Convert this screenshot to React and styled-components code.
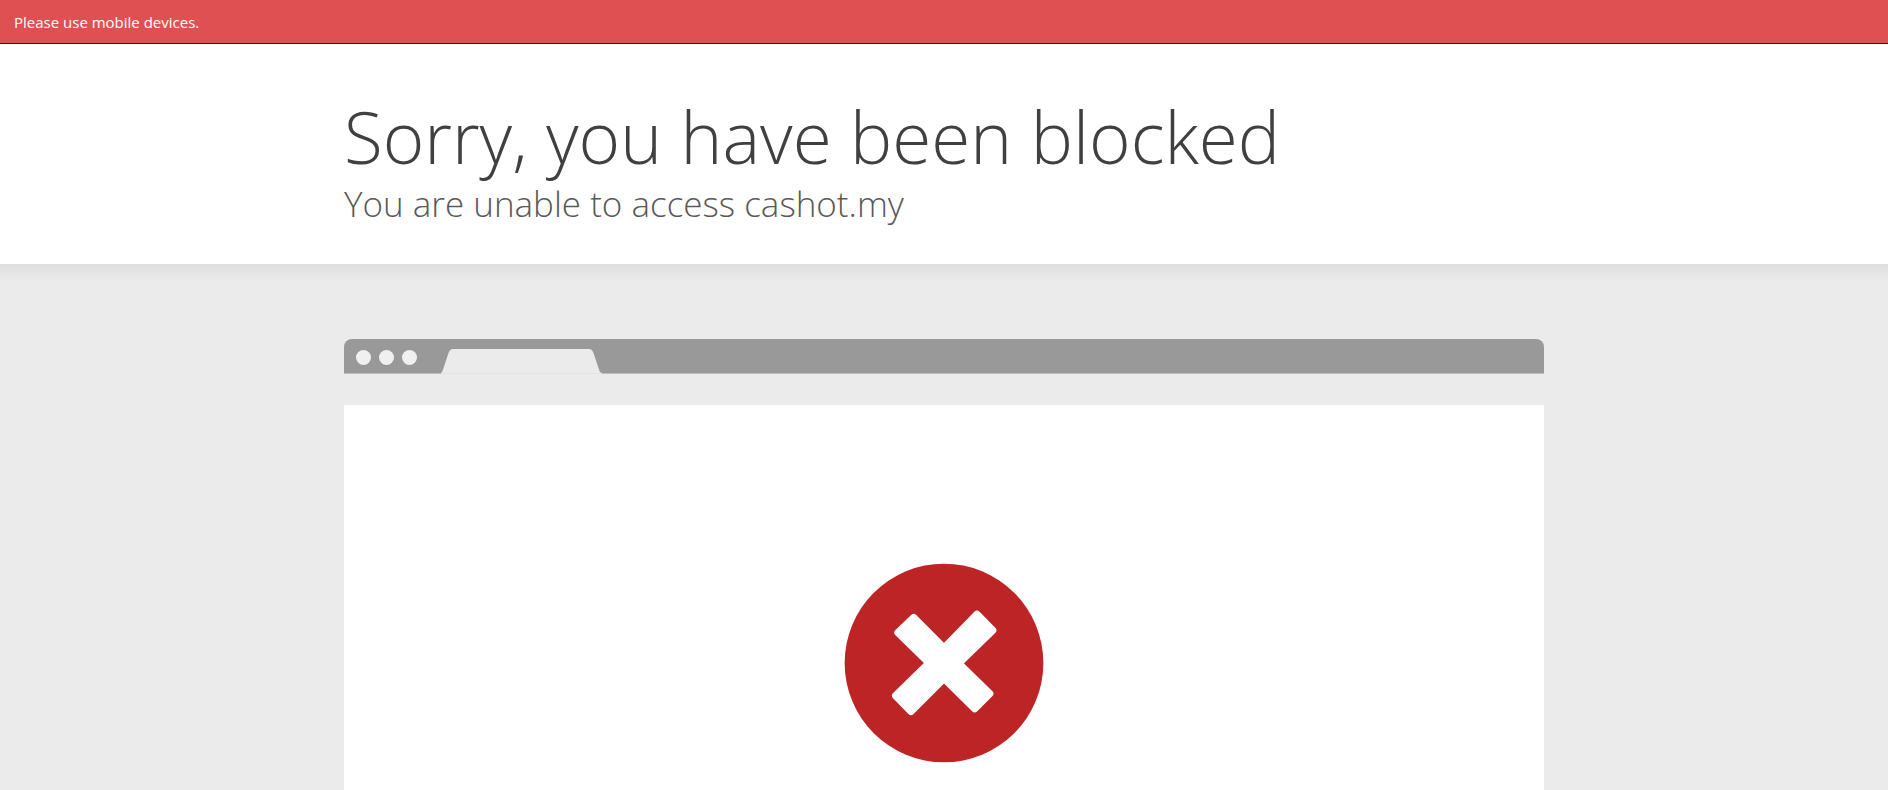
import React from "react";
import styled, { createGlobalStyle } from "styled-components";

const GlobalStyle = createGlobalStyle`
  * {
    box-sizing: border-box;
  }
  body {
    margin: 0;
    background-color: #fff;
    color: #404040;
    font-family: "Segoe UI", "Open Sans", "Noto Sans", sans-serif;
  }
`;

const Page = styled.div`
  display: flex;
  flex-direction: column;
  height: 100vh;
  overflow: hidden;
`;

const Alert = styled.div`
  padding: 12px 14px 11px;
  border-bottom: 1px solid #521010;
  background-color: #df5052;
  color: #fff;
  font-size: 15px;
  line-height: 20px;
`;

const Container = styled.div`
  width: 100%;
  max-width: 1200px;
  margin: 0 auto;
`;

const Header = styled.header`
  padding: 48px 0 38px;
`;

const Title = styled.h1`
  margin: 0;
  font-size: 71px;
  font-weight: 300;
  line-height: 90px;
`;

const Subtitle = styled.h2`
  margin: 0;
  color: #595959;
  font-size: 35px;
  font-weight: 300;
  line-height: 44px;
`;

const Section = styled.section`
  display: flex;
  flex: 1;
  padding-top: 75px;
  background: linear-gradient(#dedede, #ebebeb 18px);
`;

const Browser = styled(Container)`
  display: flex;
  flex-direction: column;
`;

const TitleBar = styled.div`
  display: flex;
  align-items: flex-end;
  height: 35px;
  padding-left: 12px;
  border-bottom: 1px solid #bdbdbd;
  border-radius: 8px 8px 0 0;
  background-color: #999;
`;

const Dots = styled.div`
  display: flex;
  gap: 8px;
  margin: 0 24px 8px 0;
`;

const Dot = styled.span`
  width: 15px;
  height: 15px;
  border-radius: 50%;
  background-color: #f0f0f0;
`;

const Tab = styled.svg`
  margin-bottom: -1px;
`;

const Screen = styled.main`
  display: flex;
  flex: 1;
  justify-content: center;
  align-items: flex-start;
  margin-top: 31px;
  padding-top: 158px;
  background-color: #fff;
`;

const TabShape = () => (
  <Tab width="161" height="25" viewBox="0 0 161 25" aria-hidden="true">
    <path
      d="M0 24Q1 23.500 1.500 22L7.500 4Q9 0 12 0H148Q151 0 152.500 4L158.500 22Q159 23.500 161 24Z"
      fill="#ebebeb"
    />
    <path d="M0 24H161V25H0Z" fill="#e3e3e3" />
  </Tab>
);

const BlockedIcon = () => (
  <svg
    width="200"
    height="200"
    viewBox="71 69 600 600"
    role="img"
    aria-label="Blocked"
  >
    <circle cx="371" cy="369" r="298" fill="#bd2426" />
    <path
      d="M233 278L280 233L371 324L470 223L517 271L415 370L508 461L463 506L371 415L272 514L226 467L326 369Z"
      fill="#fff"
      stroke="#fff"
      strokeWidth="22"
      strokeLinejoin="round"
    />
  </svg>
);

const App = () => {
  return (
    <Page>
      <GlobalStyle />
      <Alert role="alert">Please use mobile devices.</Alert>
      <Header>
        <Container>
          <Title>Sorry, you have been blocked</Title>
          <Subtitle>You are unable to access cashot.my</Subtitle>
        </Container>
      </Header>
      <Section>
        <Browser>
          <TitleBar>
            <Dots>
              <Dot />
              <Dot />
              <Dot />
            </Dots>
            <TabShape />
          </TitleBar>
          <Screen>
            <BlockedIcon />
          </Screen>
        </Browser>
      </Section>
    </Page>
  );
};

export default App;
